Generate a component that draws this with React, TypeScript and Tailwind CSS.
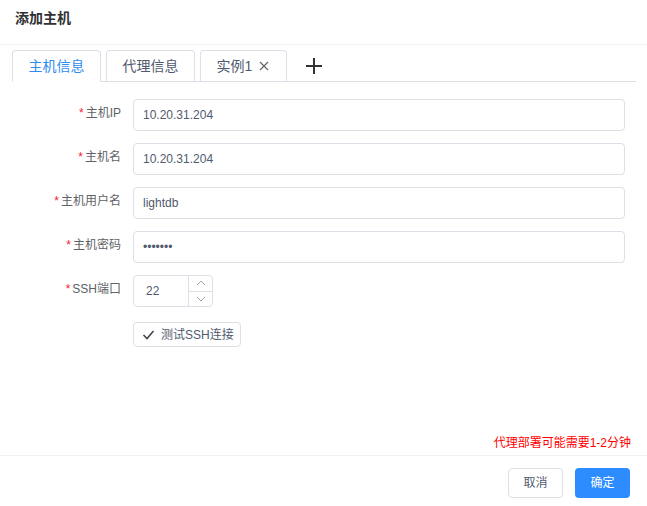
import React from "react";

const font = { fontFamily: '"Liberation Sans", "Noto Sans CJK SC", sans-serif' };

function Row({ label, children }: { label: string; children: React.ReactNode }) {
  return (
    <div className="flex items-start h-[32px]">
      <div className="w-[121px] flex justify-end items-center h-[28px] text-[12px] text-[#606266]">
        <span className="text-[#f5222d] mr-[2px] text-[12px]">*</span>
        {label}
      </div>
      <div className="ml-[12px] flex-1">{children}</div>
    </div>
  );
}

function Input({ value }: { value: string }) {
  return (
    <div className="w-[492px] h-[32px] border border-[#dcdfe6] rounded-[4px] flex items-center px-[9px] text-[12px] text-[#515a6e]">
      {value}
    </div>
  );
}

export default function App() {
  return (
    <div className="w-[647px] h-[506px] bg-white flex flex-col text-[#606266]" style={font}>
      <div className="h-[45px] border-b border-[#f2f2f2] px-[15px] pt-[9px] text-[14px] font-bold text-[#303133] leading-[18px]">
        添加主机
      </div>
      <div className="mt-[5px] ml-[12px] mr-[11px] flex items-end h-[32px] border-b border-[#dcdfe6]">
        <div className="w-[89px] h-[32px] -mb-px border border-[#dcdfe6] border-b-white bg-white rounded-t-[4px] flex items-center justify-center text-[14px] text-[#2d8cf0]">
          主机信息
        </div>
        <div className="ml-[5px] w-[89px] h-[31px] border border-b-0 border-[#dcdfe6] rounded-t-[4px] flex items-center justify-center text-[14px] text-[#515a6e]">
          代理信息
        </div>
        <div className="ml-[5px] w-[87px] h-[31px] border border-b-0 border-[#dcdfe6] rounded-t-[4px] flex items-center justify-center text-[14px] text-[#515a6e]">
          实例1
          <svg width="12" height="12" viewBox="0 0 12 12" className="ml-[6px]">
            <path d="M2 2 L10 10 M10 2 L2 10" stroke="#606266" strokeWidth="1.1" />
          </svg>
        </div>
        <div className="ml-[18px] h-[31px] flex items-center">
          <svg width="18" height="18" viewBox="0 0 18 18">
            <path d="M9 1 V17 M1 9 H17" stroke="#333" strokeWidth="2" />
          </svg>
        </div>
      </div>
      <div className="mt-[17px] flex flex-col gap-[12px]">
        <Row label="主机IP">
          <Input value="10.20.31.204" />
        </Row>
        <Row label="主机名">
          <Input value="10.20.31.204" />
        </Row>
        <Row label="主机用户名">
          <Input value="lightdb" />
        </Row>
        <Row label="主机密码">
          <Input value="•••••••" />
        </Row>
        <Row label="SSH端口">
          <div className="w-[80px] h-[32px] border border-[#dcdfe6] rounded-[4px] flex text-[12px] text-[#515a6e]">
            <div className="flex-1 flex items-center pl-[12px]">22</div>
            <div className="w-[24px] border-l border-[#dcdfe6] flex flex-col">
              <div className="flex-1 border-b border-[#dcdfe6] flex items-center justify-center">
                <svg width="10" height="6" viewBox="0 0 10 6">
                  <path d="M1 5 L5 1 L9 5" stroke="#a0a4ab" fill="none" strokeWidth="1" />
                </svg>
              </div>
              <div className="flex-1 flex items-center justify-center">
                <svg width="10" height="6" viewBox="0 0 10 6">
                  <path d="M1 1 L5 5 L9 1" stroke="#a0a4ab" fill="none" strokeWidth="1" />
                </svg>
              </div>
            </div>
          </div>
        </Row>
      </div>
      <div className="mt-[15px] ml-[133px]">
        <div className="w-[108px] h-[25px] border border-[#dcdfe6] rounded-[4px] flex items-center pl-[8px] text-[12px] text-[#515a6e]">
          <svg width="13" height="13" viewBox="0 0 13 13" className="mr-[6px]">
            <path d="M1.5 7 L5 10.5 L11.5 3" stroke="#404550" fill="none" strokeWidth="1.6" />
          </svg>
          测试SSH连接
        </div>
      </div>
      <div className="flex-1" />
      <div className="flex justify-end pr-[16px] pb-[4px] text-[12px] text-[#ff0000] leading-[16px]">
        代理部署可能需要1-2分钟
      </div>
      <div className="h-[51px] border-t border-[#f0f0f0] flex justify-end items-start pt-[12px] pr-[17px] gap-[12px]">
        <div className="w-[55px] h-[30px] border border-[#dcdfe6] rounded-[4px] flex items-center justify-center text-[12px] text-[#515a6e]">
          取消
        </div>
        <div className="w-[55px] h-[30px] bg-[#2d8cff] rounded-[4px] flex items-center justify-center text-[12px] text-white">
          确定
        </div>
      </div>
    </div>
  );
}
